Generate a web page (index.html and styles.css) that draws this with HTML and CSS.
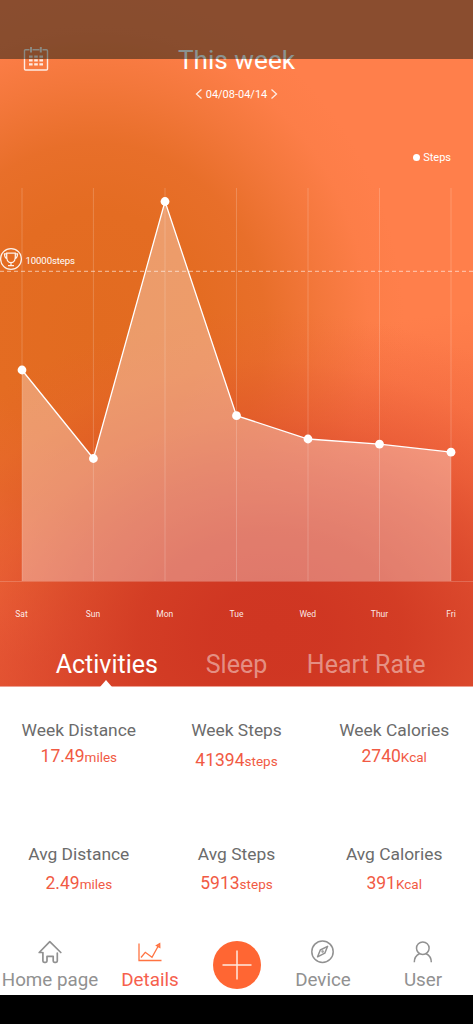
FILE: index.html
```html
<!DOCTYPE html>
<html lang="en">
<head>
<meta charset="utf-8">
<meta name="viewport" content="width=device-width, initial-scale=1">
<title>This week</title>
<link rel="stylesheet" href="styles.css">
</head>
<body>
<main class="app">
  <section class="hero">
    <div class="status-shade"></div>
    <header class="header">
      <svg class="calendar" viewBox="0 0 26 26" width="26" height="26" fill="none" stroke="#fff" stroke-opacity=".85" stroke-width="1.4">
        <path d="M6.5 3.7H2.6Q1.5 3.7 1.5 4.8V22.9Q1.5 24 2.6 24H23.4Q24.5 24 24.5 22.9V4.8Q24.5 3.7 23.4 3.7H19.5M9.5 3.7H16.5"/>
        <path d="M8 1V6.5M17.8 1V6.5" stroke-width="2"/>
        <path d="M6 10.6H20M6 14.4H20M6 18.3H20" stroke-width="2.2" stroke-dasharray="3.6 1.6"/>
      </svg>
      <h1 class="title">This week</h1>
    </header>
    <div class="range">
      <svg viewBox="0 0 8 10" width="8" height="10"><path d="M6.5 .5 1.5 5 6.5 9.5"/></svg>
      <span>04/08-04/14</span>
      <svg viewBox="0 0 8 10" width="8" height="10"><path d="M1.5 .5 6.5 5 1.5 9.5"/></svg>
    </div>
    <div class="legend"><i class="dot"></i><span>Steps</span></div>
    <svg class="chart" viewBox="0 170 473 460" width="473" height="460">
      <path class="grid" d="M22 188V581M93.4 188V581M165 188V581M236.5 188V581M308 188V581M379.5 188V581M451 188V581M0 581.5H473"/>
      <path class="area" d="M22 370 93.4 458.5 165 201.5 236.5 415.7 308 439 379.5 444.2 451 452.2V581H22Z"/>
      <path class="goal" d="M0 271.3H473"/>
      <path class="line" d="M22 370 93.4 458.5 165 201.5 236.5 415.7 308 439 379.5 444.2 451 452.2"/>
      <g fill="#fff">
        <circle cx="22" cy="370" r="4.4"/><circle cx="93.4" cy="458.5" r="4.4"/><circle cx="165" cy="201.5" r="4.4"/><circle cx="236.5" cy="415.7" r="4.4"/><circle cx="308" cy="439" r="4.4"/><circle cx="379.5" cy="444.2" r="4.4"/><circle cx="451" cy="452.2" r="4.4"/>
      </g>
      <g class="trophy">
        <circle cx="11" cy="259" r="10.4"/>
        <path d="M6.7 253.2H15.3V257C15.3 264.5 6.7 264.5 6.7 257ZM6.7 253.8H4.5Q4.5 258 7.3 258.8M15.3 253.8H17.5Q17.5 258 14.7 258.8M11 262.4V265.3M8 265.6H14"/>
      </g>
      <text class="goal-label" x="25.5" y="264" textLength="49.5">10000steps</text>
      <g class="days">
        <text x="21.5" y="616.5">Sat</text><text x="93" y="616.5">Sun</text><text x="164.8" y="616.5">Mon</text><text x="236.5" y="616.5">Tue</text><text x="307.8" y="616.5">Wed</text><text x="379.5" y="616.5">Thur</text><text x="451" y="616.5">Fri</text>
      </g>
    </svg>
    <div class="tabs">
      <div class="tab active">Activities</div>
      <div class="tab">Sleep</div>
      <div class="tab">Heart Rate</div>
    </div>
  </section>
  <section class="stats">
    <div class="stat"><div class="label">Week Distance</div><div class="value">17.49<small>miles</small></div></div>
    <div class="stat low"><div class="label">Week Steps</div><div class="value">41394<small>steps</small></div></div>
    <div class="stat"><div class="label">Week Calories</div><div class="value">2740<small>Kcal</small></div></div>
    <div class="stat avg"><div class="label">Avg Distance</div><div class="value">2.49<small>miles</small></div></div>
    <div class="stat avg"><div class="label">Avg Steps</div><div class="value">5913<small>steps</small></div></div>
    <div class="stat avg"><div class="label">Avg Calories</div><div class="value">391<small>Kcal</small></div></div>
  </section>
  <nav class="nav">
    <div class="item">
      <svg viewBox="0 0 24 24" width="24" height="24"><path stroke-width="1.7" stroke-linejoin="round" stroke-linecap="round" d="M3.9 12.5H1.2L11.8 1.7 22.8 12.5M19.3 13V21Q19.3 22.3 18 22.3H16.5Q15.2 22.3 15.2 21V16.4H9V21Q9 22.3 7.7 22.3H6.2Q4.9 22.3 4.9 21V12.5"/></svg>
      <span>Home page</span>
    </div>
    <div class="item selected">
      <svg viewBox="0 0 24 24" width="24" height="24"><path stroke-width="1.3" d="M1 3.5V20.5H23.5M3 17.5 7.3 12.3 14 17.2 20.7 5.2M18.5 5.5 21.7 3.7 21.8 7.3Z"/></svg>
      <span>Details</span>
    </div>
    <div class="add"><svg viewBox="0 0 48 48" width="48" height="48"><circle cx="24" cy="24" r="24" fill="#ff6633"/><path d="M24 9.5V38.5M9.5 24H38.5" stroke="#ffe9df" stroke-width="1.5"/></svg></div>
    <div class="item">
      <svg viewBox="0 0 24 24" width="24" height="24"><g stroke-width="1.5"><circle cx="11.5" cy="11.7" r="10.7"/><path stroke-linejoin="round" d="M16.6 6.3 13.8 13.2 6.6 16.8 9.3 10Z"/><circle cx="11.6" cy="11.6" r=".5"/></g></svg>
      <span>Device</span>
    </div>
    <div class="item">
      <svg viewBox="0 0 24 24" width="24" height="24"><g stroke-width="1.5"><circle cx="11.8" cy="8.2" r="6.3"/><path d="M3.3 22.3Q3.3 16.2 8.5 13.8M15.1 13.8Q20.3 16.2 20.3 22.3"/></g></svg>
      <span>User</span>
    </div>
  </nav>
  <div class="system-bar"></div>
</main>
</body>
</html>
```
FILE: styles.css
```css
* { box-sizing: border-box; }
body { margin: 0; font-family: Roboto, "Liberation Sans", sans-serif; background: #fff; }
.app { width: 473px; height: 1024px; display: flex; flex-direction: column; overflow: hidden; }

.hero {
  position: relative;
  height: 687px;
  flex: none;
  display: flex;
  flex-direction: column;
  border-bottom: 1px solid #ee9f91;
  background:
    radial-gradient(ellipse 410px 320px at 270px 630px, #cf3622 0%, rgba(207,54,34,.98) 14%, rgba(208,56,34,.88) 32%, rgba(212,62,38,.68) 50%, rgba(220,72,42,.42) 67%, rgba(230,85,50,.17) 84%, rgba(240,100,60,0) 100%),
    radial-gradient(ellipse 310px 340px at 95px 330px, #e26b20 0%, #e46c22 35%, rgba(228,108,36,.85) 55%, rgba(232,112,44,.5) 73%, rgba(242,120,58,.18) 88%, rgba(255,127,75,0) 100%),
    linear-gradient(172deg, #ff7f4b 50%, #f56c42 72%, #e65836 92%);
}
.status-shade { position: absolute; inset: 0 0 auto; height: 59px; background: rgba(0, 20, 15, .46); border-bottom: 0; z-index: 1; }

.header { height: 80px; padding-top: 40px; display: grid; grid-template-columns: 60px 1fr 60px; align-items: center; }
.calendar { margin: -2px 0 0 23px; }
.title { margin: 0; color: #fff; font-size: 26.2px; line-height: 40px; font-weight: 400; text-align: center; }

.range { height: 28px; display: flex; align-items: center; justify-content: center; gap: 3px; color: #fff; font-size: 11px; }
.range svg { fill: none; stroke: #fff; stroke-opacity: .85; stroke-width: 1.3; }

.legend { height: 62px; padding: 37px 22px 0; display: flex; align-items: center; justify-content: flex-end; gap: 3px; color: #fff; font-size: 11px; }
.dot { width: 7px; height: 7px; border-radius: 50%; background: #fff; }

.chart { display: block; flex: none; }
.grid { fill: none; stroke: #fff; stroke-opacity: .19; stroke-width: 1; }
.area { fill: #fff; fill-opacity: .33; }
.goal { stroke: #fff; stroke-opacity: .6; stroke-dasharray: 4 3; }
.line { fill: none; stroke: #fff; stroke-width: 1.3; }
.trophy { fill: none; stroke: #fff; stroke-opacity: .9; stroke-width: 1.3; }
.goal-label { fill: #fff; font-size: 9.6px; }
.days { fill: #fff; fill-opacity: .9; font-size: 8.5px; text-anchor: middle; }

.tabs { height: 56px; padding: 0 42px; display: grid; grid-template-columns: repeat(3, 1fr); font-size: 25px; line-height: 69px; text-align: center; color: rgba(255, 255, 255, .45); }
.tab { position: relative; height: 56px; white-space: nowrap; }
.active { color: #fff; }
.active::after { content: ""; position: absolute; left: 50%; bottom: -1px; margin-left: -7px; border: solid transparent; border-width: 0 6.5px 7px; border-bottom-color: #fff; }

.stats { height: 250px; flex: none; padding-top: 31px; display: grid; grid-template-columns: repeat(3, 1fr); grid-template-rows: 124px 1fr; text-align: center; }
.label { color: #6b6b6b; font-size: 17.4px; line-height: 25px; }
.value { color: #f15a44; font-size: 17.5px; line-height: 27px; }
.value small { font-size: 13.5px; }
.low .value { margin-top: 4px; }
.avg .value { margin-top: 3px; }

.nav { height: 58px; flex: none; display: grid; grid-template-columns: 100px 100px 73px 100px 100px; }
.item { padding-top: 3px; display: flex; flex-direction: column; align-items: center; color: #919191; font-size: 18.8px; line-height: 33px; white-space: nowrap; }
.item svg { fill: none; stroke: currentColor; flex: none; }
.selected { color: #f6604d; }
.selected svg { stroke: #ff7342; }
.add { padding-top: 4px; display: flex; justify-content: center; }
.system-bar { flex: 1; background: #000; }
```
